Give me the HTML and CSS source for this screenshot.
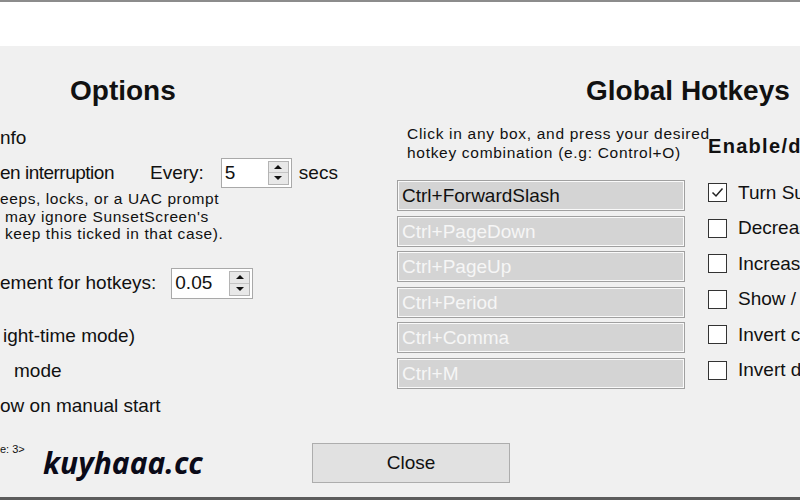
FILE: index.html
```html
<!DOCTYPE html>
<html>
<head>
<meta charset="utf-8">
<link rel="stylesheet" href="styles.css">
</head>
<body>
<div class="window">
  <div class="topbar"></div>
  <div class="content">
    <div class="cols">
      <div class="left">
        <div class="head-block"><h1 class="heading options">Options</h1></div>
        <div class="row">nfo</div>
        <div class="row">
          <span class="lbl-a">en interruption</span>
          <span class="every">Every:</span>
          <span class="spin spin-a"><span class="spin-val">5</span><span class="spin-btns"><span class="sb up"></span><span class="sb down"></span></span></span>
          <span class="secs">secs</span>
        </div>
        <div class="small">
          <div>eeps, locks, or a UAC prompt</div>
          <div>&nbsp;may ignore SunsetScreen's</div>
          <div>&nbsp;keep this ticked in that case).</div>
        </div>
        <div class="row row-inc">
          <span class="lbl-b">ement for hotkeys:</span>
          <span class="spin spin-b"><span class="spin-val">0.05</span><span class="spin-btns"><span class="sb up"></span><span class="sb down"></span></span></span>
        </div>
        <div class="row row-gap ind-a">ight-time mode)</div>
        <div class="row ind-b">mode</div>
        <div class="row">ow on manual start</div>
        <div class="footer">
          <span class="ver">e: 3&gt;</span>
          <button class="close">Close</button>
          <span class="watermark">kuyhaaa.cc</span>
        </div>
      </div>
      <div class="mid">
        <div class="hint">
          <div>Click in any box, and press your desired</div>
          <div>hotkey combination (e.g: Control+O)</div>
        </div>
        <div class="keys">
          <div class="key active">Ctrl+ForwardSlash</div>
          <div class="key">Ctrl+PageDown</div>
          <div class="key">Ctrl+PageUp</div>
          <div class="key">Ctrl+Period</div>
          <div class="key">Ctrl+Comma</div>
          <div class="key">Ctrl+M</div>
        </div>
      </div>
      <div class="right">
        <h1 class="heading global">Global Hotkeys</h1>
        <div class="enable">Enable/disable</div>
        <div class="checks">
          <div class="check"><span class="box"><svg width="15" height="15" viewBox="0 0 15 15"><path d="M2.5 7.5 L6 11 L12.5 3.5" fill="none" stroke="#222" stroke-width="1.5"/></svg></span><span>Turn SunsetScreen</span></div>
          <div class="check"><span class="box"></span><span>Decrease</span></div>
          <div class="check"><span class="box"></span><span>Increase</span></div>
          <div class="check"><span class="box"></span><span>Show / hide</span></div>
          <div class="check"><span class="box"></span><span>Invert colours</span></div>
          <div class="check"><span class="box"></span><span>Invert dark</span></div>
        </div>
      </div>
    </div>
  </div>
</div>
</body>
</html>
```
FILE: styles.css
```css
html, body {
  margin: 0;
  padding: 0;
}
body {
  width: 800px;
  height: 500px;
  overflow: hidden;
  font-family: "Liberation Sans", Arial, sans-serif;
  color: #111;
}
.window {
  width: 800px;
  height: 500px;
  display: flex;
  flex-direction: column;
  background: #f0f0f0;
  overflow: hidden;
}
.topbar {
  height: 44px;
  flex: none;
  background: #fff;
  border-top: 2px solid #8c8c8c;
}
.content {
  flex: 1;
  border-bottom: 3px solid #5c5c5c;
  overflow: hidden;
}
.cols {
  display: flex;
  height: 100%;
}
.left {
  width: 397px;
  flex: none;
  display: flex;
  flex-direction: column;
  position: relative;
  font-size: 19px;
}
.heading {
  margin: 0;
  font-size: 28px;
  font-weight: bold;
  line-height: 32px;
  color: #111;
}
.head-block {
  height: 74px;
  box-sizing: border-box;
  padding-top: 29px;
  padding-left: 70px;
}
.row {
  height: 35px;
  display: flex;
  align-items: center;
  white-space: nowrap;
}
.lbl-a { letter-spacing: -0.5px; }
.every { margin-left: 36px; }
.spin {
  display: flex;
  box-sizing: border-box;
  border: 1px solid #a9a9a9;
  background: #fff;
  padding: 2px;
}
.spin-a { width: 71px; height: 30px; margin-left: 17px; }
.spin-b { width: 82px; height: 31px; margin-left: 15px; }
.spin-val {
  flex: 1;
  line-height: 24px;
  padding-left: 1px;
  font-size: 19px;
}
.spin-btns {
  width: 19px;
  display: flex;
  flex-direction: column;
  border: 1px solid #b4b4b4;
  background: #e8e8e8;
}
.sb {
  flex: 1;
  display: flex;
  align-items: center;
  justify-content: center;
}
.sb.up { border-bottom: 1px solid #c4c4c4; }
.sb.up::before {
  content: "";
  border-left: 4px solid transparent;
  border-right: 4px solid transparent;
  border-bottom: 4px solid #111;
}
.sb.down::before {
  content: "";
  border-left: 4px solid transparent;
  border-right: 4px solid transparent;
  border-top: 4px solid #111;
}
.secs { margin-left: 7px; }
.small {
  font-size: 15.5px;
  line-height: 17.5px;
  white-space: nowrap;
  letter-spacing: 0.6px;
}
.row-inc { margin-top: 23px; height: 35px; }
.row-gap { margin-top: 18px; }
.ind-a { padding-left: 3px; }
.ind-b { padding-left: 14px; }
.footer {
  margin-top: 19.5px;
  display: grid;
  grid-template-columns: 312px 198px;
  align-items: start;
}
.ver {
  font-size: 11px;
  line-height: 12px;
}
.close {
  width: 198px;
  height: 40px;
  box-sizing: border-box;
  border: 1px solid #adadad;
  background: #e1e1e1;
  font-family: "Liberation Sans", Arial, sans-serif;
  font-size: 19px;
  color: #111;
  padding: 0;
}
.watermark {
  position: absolute;
  left: 43px;
  top: 400px;
  font-family: "Open Sans", sans-serif;
  font-weight: bold;
  font-style: italic;
  font-size: 30px;
  line-height: 34px;
  color: #0a0a18;
}
.mid {
  width: 311px;
  flex: none;
  font-size: 19px;
}
.hint {
  padding-top: 77.5px;
  padding-left: 10px;
  font-size: 15.5px;
  line-height: 19px;
  letter-spacing: 0.7px;
  white-space: nowrap;
}
.keys {
  margin-top: 18.5px;
  display: flex;
  flex-direction: column;
  gap: 4.5px;
}
.key {
  width: 288px;
  height: 31px;
  box-sizing: border-box;
  border: 1px solid #a0a0a0;
  box-shadow: inset 0 0 0 1px #fafafa;
  background: #d4d4d4;
  color: #f6f6f6;
  line-height: 29px;
  padding-left: 4px;
  font-size: 19px;
  white-space: nowrap;
}
.key.active { color: #111; }
.right {
  flex: 1;
  min-width: 0;
  position: relative;
  white-space: nowrap;
  font-size: 19px;
}
.global {
  margin-left: -122px;
  padding-top: 29px;
}
.enable {
  margin-top: 28px;
  font-weight: bold;
  font-size: 20px;
  letter-spacing: 1.3px;
  line-height: 22px;
}
.checks {
  margin-top: 18px;
}
.check {
  height: 35.5px;
  display: flex;
  align-items: center;
}
.box {
  width: 19px;
  height: 19px;
  flex: none;
  box-sizing: border-box;
  border: 1px solid #333;
  background: #fff;
  display: flex;
  align-items: center;
  justify-content: center;
  margin-right: 11px;
}
```
